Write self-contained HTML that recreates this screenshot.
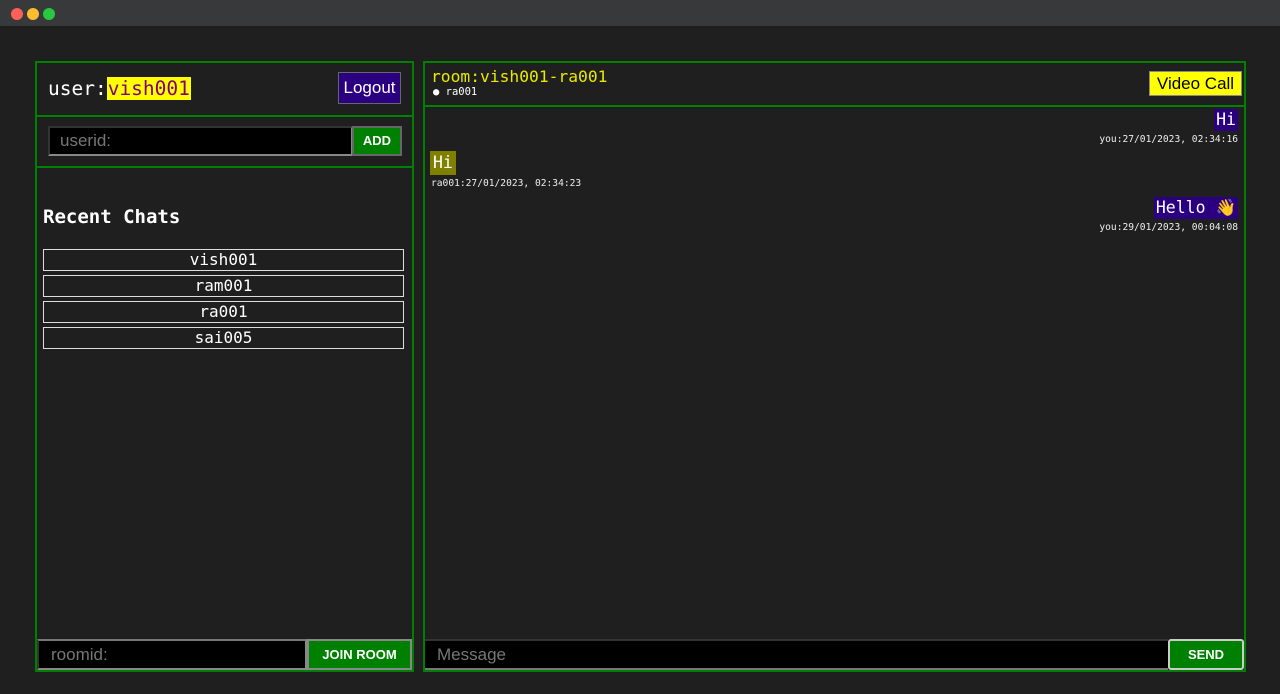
<!DOCTYPE html>
<html><head><meta charset="utf-8"><style>
*{box-sizing:border-box;margin:0;padding:0}
body{width:1280px;height:694px;background:#1f1f1f;position:relative;overflow:hidden;font-family:"DejaVu Sans Mono","Liberation Mono",monospace;color:#fff}
.abs{position:absolute}
.bar{left:0;top:0;width:1280px;height:26px;background:#38393b}
.dot{width:12px;height:12px;border-radius:50%;top:8px}
.panel{border:2px solid #008000}
.hr{height:2px;background:#008000}
.sans{font-family:"Liberation Sans",sans-serif}
.item{left:43px;width:361px;height:22px;border:1px solid #ddd;text-align:center;font-size:16px;line-height:20px}
</style></head><body>
<div class="abs bar"></div>
<div class="abs dot" style="left:11px;background:#fe5f57"></div>
<div class="abs dot" style="left:27px;background:#febc2e"></div>
<div class="abs dot" style="left:43px;background:#28c840"></div>

<div class="abs panel" style="left:35px;top:61px;width:379px;height:611px"></div>
<div class="abs hr" style="left:36px;top:115px;width:377px"></div>
<div class="abs hr" style="left:36px;top:166px;width:377px"></div>
<div class="abs" style="left:48px;top:75px;font-size:19.5px;line-height:27px">user:<span style="background:#ffff00;color:#800080;padding:0 1px">vish001</span></div>
<div class="abs sans" style="left:338px;top:72px;width:63px;height:32px;background:#2a0080;border:1px solid #666;font-size:17px;line-height:30px;text-align:center">Logout</div>
<div class="abs sans" style="left:48px;top:126px;width:305px;height:30px;background:#000;border:2px solid #555;border-color:#333 #888 #888 #333;color:#777;font-size:17px;line-height:26px;padding-left:10px">userid:</div>
<div class="abs sans" style="left:352px;top:126px;width:50px;height:30px;background:#008000;border:2px solid #666;font-weight:bold;font-size:13px;line-height:26px;text-align:center">ADD</div>
<div class="abs" style="left:43px;top:206px;font-size:19px;font-weight:bold">Recent Chats</div>
<div class="abs item" style="top:249px">vish001</div>
<div class="abs item" style="top:275px">ram001</div>
<div class="abs item" style="top:301px">ra001</div>
<div class="abs item" style="top:327px">sai005</div>
<div class="abs sans" style="left:37px;top:639px;width:270px;height:31px;background:#000;border:2px solid #777;border-color:#777 #888 #888 #333;color:#777;font-size:17px;line-height:27px;padding-left:12px">roomid:</div>
<div class="abs sans" style="left:307px;top:639px;width:105px;height:31px;background:#008000;border:2px solid #888;font-weight:bold;font-size:13px;line-height:27px;text-align:center">JOIN ROOM</div>

<div class="abs panel" style="left:423px;top:61px;width:823px;height:611px"></div>
<div class="abs hr" style="left:424px;top:105px;width:821px"></div>
<div class="abs" style="left:431px;top:67px;font-size:16.3px;color:#e8e800">room:vish001-ra001</div>
<div class="abs" style="left:433px;top:86px;font-size:10.5px">● ra001</div>
<div class="abs sans" style="left:1149px;top:71px;width:93px;height:25px;background:#ffff00;border:1px solid #888;color:#000;font-size:17px;line-height:23px;text-align:center">Video Call</div>
<div class="abs" style="right:42px;top:109px;background:#2a0080;font-size:16.5px;padding:0 2px;line-height:22px">Hi</div>
<div class="abs" style="right:42px;top:134px;font-size:9.6px;color:#eee">you:27/01/2023, 02:34:16</div>
<div class="abs" style="left:430px;top:151px;background:#808000;font-size:16.5px;padding:0 3px;line-height:24px">Hi</div>
<div class="abs" style="left:431px;top:178px;font-size:9.6px;color:#eee">ra001:27/01/2023, 02:34:23</div>
<div class="abs" style="right:42px;top:197px;background:#2a0080;font-size:16.5px;padding:0 2px;line-height:22px">Hello 👋</div>
<div class="abs" style="right:42px;top:222px;font-size:9.6px;color:#eee">you:29/01/2023, 00:04:08</div>
<div class="abs sans" style="left:425px;top:639px;width:743px;height:31px;background:#000;border-top:2px solid #333;border-bottom:2px solid #777;color:#777;font-size:17px;line-height:28px;padding-left:12px">Message</div>
<div class="abs sans" style="left:1168px;top:639px;width:76px;height:31px;background:#008000;border:2px solid #ccc;border-radius:3px;font-weight:bold;font-size:13px;line-height:27px;text-align:center">SEND</div>
</body></html>
